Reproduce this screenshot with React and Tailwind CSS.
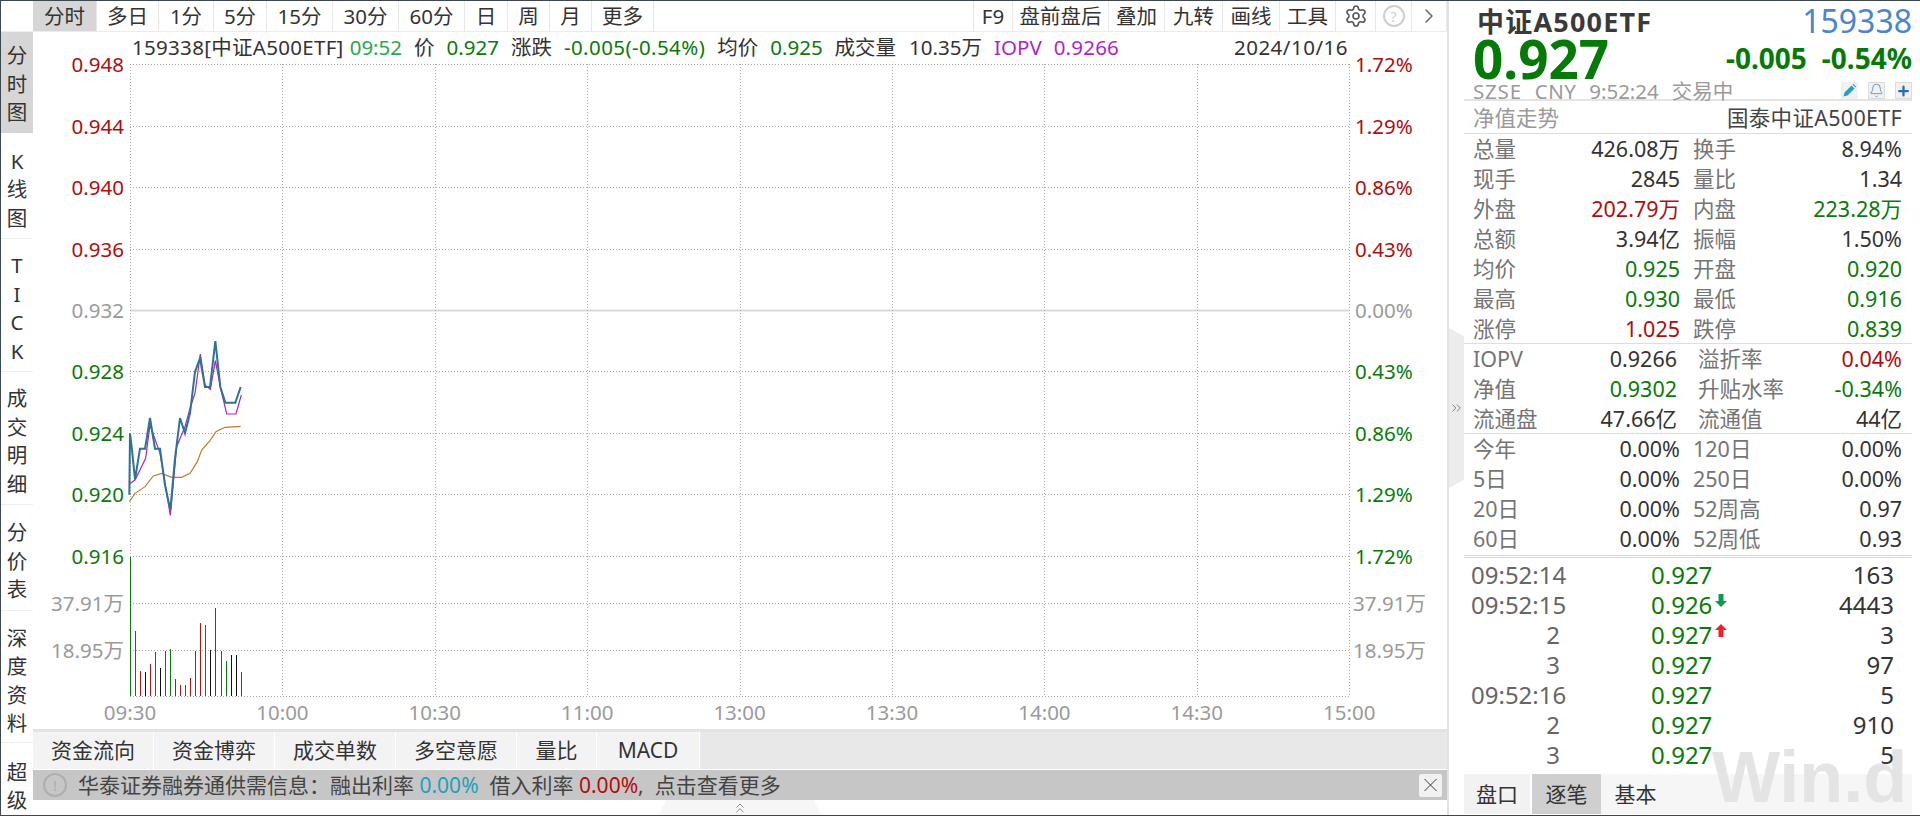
import { Settings, ChevronRight, ChevronsUp, ChevronsRight, Bell, Plus, X } from "lucide-react";

const FONT = '"Noto Sans","Noto Sans CJK SC",sans-serif';
const RED = "#b00d0d";
const GREEN = "#0a7a0a";
const GREY = "#9a9a9a";

const TOOL_TABS = [
  ["分时", 64, true], ["多日", 62], ["1分", 55], ["5分", 53], ["15分", 66], ["30分", 66], ["60分", 66], ["日", 43], ["周", 42], ["月", 42], ["更多", 62],
];
const TOOL_RIGHT = [["F9", 39], ["盘前盘后", 96], ["叠加", 56], ["九转", 58], ["画线", 57], ["工具", 56]];

const SIDE_ITEMS = [
  { chars: "分时图", cls: "h-[103px] pt-[3px] bg-[#d6d6d6] border-b-2 border-white" },
  { chars: "K线图", cls: "h-[104px] pt-[6px] border-b border-[#eeeeee]" },
  { chars: "TICK", cls: "h-[133px] pt-[6px] border-b border-[#eeeeee]" },
  { chars: "成交明细", cls: "h-[133px] pt-[6px] border-b border-[#eeeeee]" },
  { chars: "分价表", cls: "h-[106px] pt-[7px] border-b border-[#eeeeee]" },
  { chars: "深度资料", cls: "h-[132px] pt-[8px] border-b border-[#eeeeee]" },
  { chars: "超级", cls: "h-[71px] pt-[15px]" },
];

const Y_LABELS = [
  ["0.948", "1.72%", RED], ["0.944", "1.29%", RED], ["0.940", "0.86%", RED], ["0.936", "0.43%", RED],
  ["0.932", "0.00%", GREY], ["0.928", "0.43%", GREEN], ["0.924", "0.86%", GREEN], ["0.920", "1.29%", GREEN], ["0.916", "1.72%", GREEN],
];
const TIMES = ["09:30", "10:00", "10:30", "11:00", "13:00", "13:30", "14:00", "14:30", "15:00"];

// coordinates read off the reference crop, converted to page pixels below
const toPoints = (pts) => pts.map(([x, y]) => `${110 + x / 3},${330 + y / 3}`).join(" ");
const BLUE_LINE = [[58,494],[60,310],[66,360],[75,448],[90,356],[105,356],[120,264],[135,356],[150,356],[165,465],[181,540],[195,385],[210,264],[225,310],[240,250],[255,125],[270,85],[285,171],[300,171],[316,33],[331,171],[346,218],[376,218],[392,171]];
const PURPLE_LINE = [[58,462],[75,450],[107,385],[120,285],[150,370],[181,556],[200,350],[225,290],[240,235],[255,190],[271,72],[285,165],[301,178],[316,92],[332,175],[350,252],[378,252],[394,195]];
const ORANGE_LINE = [[58,515],[75,490],[105,470],[130,438],[155,430],[185,442],[215,442],[240,430],[262,395],[275,360],[300,332],[318,305],[345,292],[392,289]];

const VOLUME = [
  [390,50,"g"],[406,273,"g"],[421,393,"r"],[436,396,"k"],[451,372,"r"],[466,336,"g"],[481,384,"k"],[496,332,"g"],[511,327,"g"],[526,417,"r"],[541,435,"r"],[556,435,"g"],
  [571,414,"r"],[586,332,"r"],[601,249,"r"],[616,255,"g"],[631,330,"k"],[646,204,"r"],[664,333,"g"],[679,363,"g"],[694,345,"k"],[709,345,"k"],[724,396,"r"],
];
const VOL_COLOR = { g: "#0f7a0f", r: "#b01818", k: "#111111" };

const STATS_A = [
  ["总量", "426.08万", "#333", "换手", "8.94%", "#333"],
  ["现手", "2845", "#333", "量比", "1.34", "#333"],
  ["外盘", "202.79万", RED, "内盘", "223.28万", GREEN],
  ["总额", "3.94亿", "#333", "振幅", "1.50%", "#333"],
  ["均价", "0.925", GREEN, "开盘", "0.920", GREEN],
  ["最高", "0.930", GREEN, "最低", "0.916", GREEN],
  ["涨停", "1.025", RED, "跌停", "0.839", GREEN],
];
const STATS_B = [
  ["IOPV", "0.9266", "#333", "溢折率", "0.04%", RED],
  ["净值", "0.9302", GREEN, "升贴水率", "-0.34%", GREEN],
  ["流通盘", "47.66亿", "#333", "流通值", "44亿", "#333"],
];
const STATS_C = [
  ["今年", "0.00%", "#333", "120日", "0.00%", "#333"],
  ["5日", "0.00%", "#333", "250日", "0.00%", "#333"],
  ["20日", "0.00%", "#333", "52周高", "0.97", "#333"],
  ["60日", "0.00%", "#333", "52周低", "0.93", "#333"],
];
const TICKS = [
  ["09:52:14", "0.927", "163"],
  ["09:52:15", "0.926", "4443", "down"],
  ["2", "0.927", "3", "up"],
  ["3", "0.927", "97"],
  ["09:52:16", "0.927", "5"],
  ["2", "0.927", "910"],
  ["3", "0.927", "5"],
];

function Toolbar() {
  return (
    <div className="h-[31px] flex items-stretch border-b border-[#ececec] pl-[32px] text-[20.5px] leading-none text-[#333]">
      {TOOL_TABS.map(([label, w, active]) => (
        <div key={label} style={{ width: w }} className={`flex items-center justify-center pt-[1px] border-r border-[#e8e8e8] ${active ? "bg-[#d6d6d6]" : ""}`}>
          {label}
        </div>
      ))}
      <div className="flex-1" />
      {TOOL_RIGHT.map(([label, w]) => (
        <div key={label} style={{ width: w }} className="flex items-center justify-center pt-[1px] border-l border-[#e8e8e8]">
          {label}
        </div>
      ))}
      <div className="w-[40px] flex items-center justify-center border-l border-[#e8e8e8]">
        <Settings size={24} strokeWidth={1.6} className="text-[#555]" />
      </div>
      <div className="w-[36px] flex items-center justify-center border-l border-[#e8e8e8]">
        <div className="w-[22px] h-[22px] rounded-full border-2 border-[#cfcfcf] text-[#cfcfcf] flex items-center justify-center text-[15px]">?</div>
      </div>
      <div className="w-[36px] flex items-center justify-center border-x border-[#e8e8e8]">
        <ChevronRight size={24} strokeWidth={1.5} className="text-[#666]" />
      </div>
    </div>
  );
}

function Sidebar() {
  return (
    <div className="w-[32px] flex flex-col shrink-0 text-[20.5px] leading-[28.5px] text-[#333]">
      {SIDE_ITEMS.map((item) => (
        <div key={item.chars} className={`flex flex-col items-center justify-center ${item.cls}`}>
          {[...item.chars].map((c, i) => (
            <span key={i}>{c}</span>
          ))}
        </div>
      ))}
    </div>
  );
}

function Chart() {
  const gridX = Array.from({ length: 9 }, (_, i) => 130 + i * 152.4);
  const gridY = Y_LABELS.map((_, i) => 64.3 + i * 61.4);
  const snap = (v) => Math.round(v) + 0.5;
  return (
    <svg viewBox="33 62 1414 667" className="w-[1414px] h-[667px] overflow-visible block" style={{ fontFamily: FONT }}>
      {gridY.map((y, i) => (
        i === 4
          ? <line key={i} x1="130" x2="1349" y1={snap(y)} y2={snap(y)} stroke="#d9d9d9" strokeWidth="2" />
          : <line key={i} x1="130" x2="1349" y1={snap(y)} y2={snap(y)} stroke="#aaaaaa" strokeDasharray="1 2" />
      ))}
      {[603, 650, 696].map((y) => (
        <line key={y} x1="130" x2="1349" y1={y + 0.5} y2={y + 0.5} stroke="#aaaaaa" strokeDasharray="1 2" />
      ))}
      {gridX.map((x) => (
        <line key={x} x1={snap(x)} x2={snap(x)} y1="64" y2="696" stroke="#aaaaaa" strokeDasharray="1 2" />
      ))}

      {Y_LABELS.map(([l, r, color], i) => (
        <g key={l} fill={color} fontSize="20.5" dominantBaseline="central">
          <text x="124" y={gridY[i]} textAnchor="end">{l}</text>
          <text x="1355" y={gridY[i]}>{r}</text>
        </g>
      ))}
      {[["37.91万", 603], ["18.95万", 650]].map(([t, y]) => (
        <g key={t} fill={GREY} fontSize="20.5" dominantBaseline="central">
          <text x="124" y={y} textAnchor="end">{t}</text>
          <text x="1353" y={y}>{t}</text>
        </g>
      ))}
      {TIMES.map((t, i) => (
        <text key={t} x={gridX[i]} y="712" fill={GREY} fontSize="20.5" textAnchor="middle" dominantBaseline="central">{t}</text>
      ))}

      {VOLUME.map(([x, top, c]) => (
        <rect key={x} x={Math.round(x / 3)} y={540 + top / 3} width="1" height={696 - (540 + top / 3)} fill={VOL_COLOR[c]} shapeRendering="crispEdges" />
      ))}
      <polyline points={toPoints(ORANGE_LINE)} fill="none" stroke="#c07a2c" strokeWidth="1.2" />
      <polyline points={toPoints(PURPLE_LINE)} fill="none" stroke="#a626c4" strokeWidth="1.2" />
      <polyline points={toPoints(BLUE_LINE)} fill="none" stroke="#2c7396" strokeWidth="2" />
    </svg>
  );
}

function InfoRow() {
  return (
    <div className="h-[30px] flex items-center pl-[99px] pr-[99px] text-[20.5px] leading-none text-[#333] gap-3 whitespace-nowrap">
      <span className="tracking-[0.3px] -mr-1.5">159338[中证A500ETF]</span>
      <span className="text-[#2ca84c]">09:52</span>
      <span>价</span>
      <span className="text-[#0a7a0a]">0.927</span>
      <span>涨跌</span>
      <span className="text-[#0a7a0a] tracking-[0.4px]">-0.005(-0.54%)</span>
      <span>均价</span>
      <span className="text-[#0a7a0a]">0.925</span>
      <span>成交量</span>
      <span className="ml-[1px]">10.35万</span>
      <span className="text-[#b01fd0]">IOPV</span>
      <span className="text-[#b01fd0] tracking-[0.2px]">0.9266</span>
      <span className="ml-auto tracking-[0.5px]">2024/10/16</span>
    </div>
  );
}

function BottomBars() {
  const tabs = [["资金流向", 121], ["资金博弈", 121], ["成交单数", 121], ["多空意愿", 121], ["量比", 80], ["MACD", 103]];
  return (
    <div className="text-[21px] leading-none">
      <div className="h-[41px] border-t-[3px] border-[#e3e3e3] bg-[#e8e8e8] flex text-[#333] border-b border-b-white">
        {tabs.map(([label, w]) => (
          <div key={label} style={{ width: w }} className="bg-[#f3f3f3] border-r border-white flex items-center justify-center">{label}</div>
        ))}
      </div>
      <div className="h-[30px] bg-[#c6c6c6] flex items-center text-[#444] pl-[10px] pr-[5px] whitespace-nowrap">
        <div className="w-[24px] h-[24px] rounded-full border-2 border-[#aeaeae] text-[#aeaeae] flex items-center justify-center text-[15px] mr-[11px]">!</div>
        <span>华泰证券融券通供需信息：融出利率&nbsp;</span>
        <span className="text-[#1f9fbc]">0.00%</span>
        <span>&nbsp;&nbsp;借入利率&nbsp;</span>
        <span className="text-[#b00d0d]">0.00%</span>
        <span>,&nbsp;&nbsp;点击查看更多</span>
        <div className="ml-auto w-[23px] h-[23px] bg-[#f1f1f1] rounded-[2px] flex items-center justify-center">
          <X size={24} strokeWidth={1} className="text-[#333]" />
        </div>
      </div>
      <div className="h-[15px] flex justify-center">
        <div className="w-[163px] h-full bg-[#f6f6f6] [clip-path:polygon(8px_0,155px_0,100%_100%,0_100%)] flex justify-center">
          <ChevronsUp size={16} strokeWidth={1.2} className="text-[#777]" />
        </div>
      </div>
    </div>
  );
}

function StatGroup({ rows, split, second }) {
  return (
    <div className="pl-[9px] pr-[10px]">
      {rows.map(([a, av, ac, b, bv, bc]) => (
        <div key={a} className="h-[30px] flex items-center text-[21.5px] leading-none">
          <div style={{ width: split }} className="flex justify-between shrink-0">
            <span className="text-[#757575]">{a}</span>
            <span style={{ color: ac }}>{av}</span>
          </div>
          <div style={{ marginLeft: second }} className="flex-1 flex justify-between">
            <span className="text-[#757575]">{b}</span>
            <span style={{ color: bc }}>{bv}</span>
          </div>
        </div>
      ))}
    </div>
  );
}

function Arrow({ dir }) {
  const up = dir === "up";
  return (
    <svg width="12" height="13" viewBox="0 0 12 13" className="absolute left-[64px] top-[1px]">
      <path d={up ? "M6 0 L12 6 L8.5 6 L8.5 13 L3.5 13 L3.5 6 L0 6 Z" : "M6 13 L12 7 L8.5 7 L8.5 0 L3.5 0 L3.5 7 L0 7 Z"} fill={up ? "#f0202f" : "#0f9a4c"} />
    </svg>
  );
}

function RightPanel() {
  return (
    <div className="flex-1 flex relative">
      {/* collapse handle */}
      <div className="w-[15px] shrink-0 flex items-start">
        <div className="w-[15px] h-[160px] mt-[327px] bg-[#ececec] [clip-path:polygon(0_0,100%_8px,100%_152px,0_100%)] flex items-center justify-center">
          <ChevronsRight size={16} strokeWidth={1} className="text-[#444]" />
        </div>
      </div>

      <div className="w-[448px] relative text-[#333]">
        {/* quote header */}
        <div className="h-[100px] border-b-2 border-[#e4e4e4] relative">
          <div className="flex justify-between items-start pl-[13px] h-[45px]">
            <span className="text-[27px] font-bold leading-none mt-[7px] tracking-[1.2px] text-[#3a3a3a]">中证A500ETF</span>
            <span className="text-[32px] leading-none mt-[4px] text-[#4a86c8]">159338</span>
          </div>
          <div className="flex justify-between items-start pl-[9px] h-[36px] -mt-[13px]">
            <span className="text-[53px] font-bold leading-none text-[#067a06] -mt-[1px]">0.927</span>
            <span className="text-[28px] font-bold leading-none text-[#067a06] mt-[11px] flex gap-[15px]">
              <span>-0.005</span>
              <span>-0.54%</span>
            </span>
          </div>
          <div className="flex justify-between items-end pl-[9px] h-[26px] mt-[6px] -mb-1.5">
            <span className="text-[20.5px] leading-none text-[#9a9a9a] flex gap-[13px] whitespace-nowrap">
              <span className="tracking-[0.8px]">SZSE</span><span className="tracking-[0.4px]">CNY</span><span>9:52:24</span><span>交易中</span>
            </span>
            <span className="flex gap-[10px] mb-[2px]">
              <span className="w-[17px] h-[17px] bg-[#f1f1f1] flex items-center justify-center">
                <svg width="13" height="13" viewBox="0 0 13 13">
                  <path d="M0.5 12.5 L1.5 8.5 L8.5 1.5 L11.5 4.5 L4.5 11.5 Z M9.5 0.5 L10.5 0 L13 2.5 L12.5 3.5 Z" fill="#1fa3bf" />
                </svg>
              </span>
              <span className="w-[17px] h-[17px] bg-[#f1f1f1] border border-[#dcdcdc] flex items-center justify-center">
                <Bell size={15} strokeWidth={1.2} className="text-[#4a7fb5]" />
              </span>
              <span className="w-[17px] h-[17px] bg-[#f1f1f1] border border-[#dcdcdc] flex items-center justify-center">
                <Plus size={16} strokeWidth={3.6} className="text-[#2b6cb5]" />
              </span>
            </span>
          </div>
        </div>

        <div className="h-[31px] mt-[2px] flex items-center justify-between pl-[9px] pr-[10px] border-b border-[#dedede] text-[21.5px] leading-none">
          <span className="text-[#9a9a9a]">净值走势</span>
          <span className="text-[#444] tracking-[0.3px]">国泰中证A500ETF</span>
        </div>

        <div className="border-b border-[#dedede] h-[210px]">
          <StatGroup rows={STATS_A} split={207} second={13} />
        </div>
        <div className="border-b border-[#dedede] h-[90px]">
          <StatGroup rows={STATS_B} split={204} second={21} />
        </div>
        <div className="border-b-[3px] border-double border-[#d8d8d8] h-[124px]">
          <StatGroup rows={STATS_C} split={207} second={13} />
        </div>

        {/* ticks */}
        <div className="relative z-10 pt-[2px]">
          {TICKS.map(([t, price, vol, arrow], i) => (
            <div key={i} className="h-[30px] flex items-center text-[24px] leading-none">
              <div className="w-[96px] shrink-0 text-[#666]">
                {t.length > 1
                  ? <span className="pl-[7px]">{t}</span>
                  : <div className="w-[96px] text-right">{t}</div>}
              </div>
              <div className="ml-[91px] w-[61px] relative text-[#0a7a0a]">
                {price}
                {arrow && <Arrow dir={arrow} />}
              </div>
              <div className="w-[182px] text-right text-[#333]">{vol}</div>
            </div>
          ))}
        </div>

        {/* bottom tabs */}
        <div className="absolute left-0 top-[773px] h-[40px] w-full flex bg-[#f6f6f6] text-[21px] leading-none text-[#333]">
          <div className="w-[68px] bg-[#f2f2f2] border-r-2 border-white flex items-center justify-center">盘口</div>
          <div className="w-[69px] bg-[#cfcfcf] flex items-center justify-center">逐笔</div>
          <div className="w-[69px] flex items-center justify-center">基本</div>
        </div>
        <span className="absolute left-[248px] top-[740px] text-[72px] font-bold leading-none text-[#e4e4e4] whitespace-nowrap" style={{ fontFamily: '"Liberation Sans",sans-serif' }}>Win.d</span>
      </div>
    </div>
  );
}

export default function App() {
  return (
    <div className="w-[1920px] h-[816px] overflow-hidden bg-white border-y border-[#3d4750] border-l flex" style={{ fontFamily: FONT }}>
      <div className="w-[1446px] shrink-0 flex flex-col border-r-2 border-[#e2e2e2] box-content">
        <Toolbar />
        <div className="flex flex-1 min-h-0">
          <Sidebar />
          <div className="flex-1 min-w-0 flex flex-col">
            <InfoRow />
            <Chart />
            <BottomBars />
          </div>
        </div>
      </div>
      <RightPanel />
    </div>
  );
}
